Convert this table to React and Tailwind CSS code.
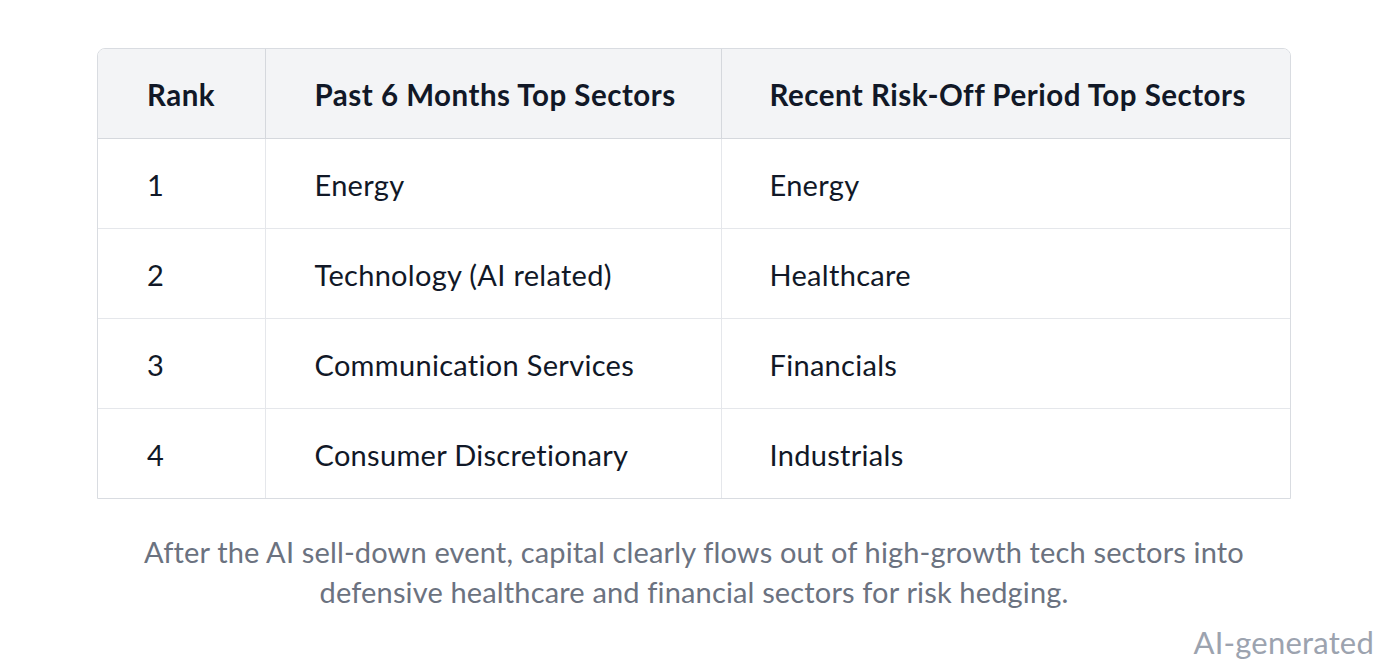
const rows = [
  { rank: "1", past: "Energy", recent: "Energy" },
  { rank: "2", past: "Technology (AI related)", recent: "Healthcare" },
  { rank: "3", past: "Communication Services", recent: "Financials" },
  { rank: "4", past: "Consumer Discretionary", recent: "Industrials" },
];

export default function App() {
  return (
    <div className="w-[1388px] h-[670px] bg-white relative font-['Lato','Noto_Sans',sans-serif] text-[#111827]">
      <div className="pt-[48px] flex justify-center">
        <div className="w-[1194px] border border-[#d9dce1] rounded-t-[8px] overflow-hidden">
          <table className="w-full border-collapse text-[29px] tracking-[0.3px]">
            <thead>
              <tr className="bg-[#f3f4f6] h-[89px] text-[29.5px] tracking-[0.5px]">
                <th className="w-[167px] pt-[3px] text-left font-bold pl-[49px] border-r border-b border-[#d5d8dd]">Rank</th>
                <th className="w-[456px] pt-[3px] text-left font-bold pl-[49px] border-r border-b border-[#d5d8dd]">Past 6 Months Top Sectors</th>
                <th className="pt-[3px] text-left font-bold pl-[48px] border-b border-[#d5d8dd]">Recent Risk-Off Period Top Sectors</th>
              </tr>
            </thead>
            <tbody>
              {rows.map((r, i) => (
                <tr key={r.rank} className="h-[90px]">
                  <td className={`pt-[3px] pl-[49px] border-r border-[#e5e7eb] ${i < rows.length - 1 ? "border-b" : ""}`}>{r.rank}</td>
                  <td className={`pt-[3px] pl-[49px] border-r border-[#e5e7eb] ${i < rows.length - 1 ? "border-b" : ""}`}>{r.past}</td>
                  <td className={`pt-[3px] pl-[48px] border-[#e5e7eb] ${i < rows.length - 1 ? "border-b" : ""}`}>{r.recent}</td>
                </tr>
              ))}
            </tbody>
          </table>
        </div>
      </div>
      <p className="mt-[33px] text-center text-[29px] tracking-[0.15px] leading-[40px] text-[#6b7280] px-[120px]">
        After the AI sell-down event, capital clearly flows out of high-growth tech sectors into defensive healthcare and financial sectors for risk hedging.
      </p>
      <div className="absolute right-[14px] bottom-[5px] text-[31px] tracking-[0.2px] text-[#9ca3af]">AI-generated</div>
    </div>
  );
}
